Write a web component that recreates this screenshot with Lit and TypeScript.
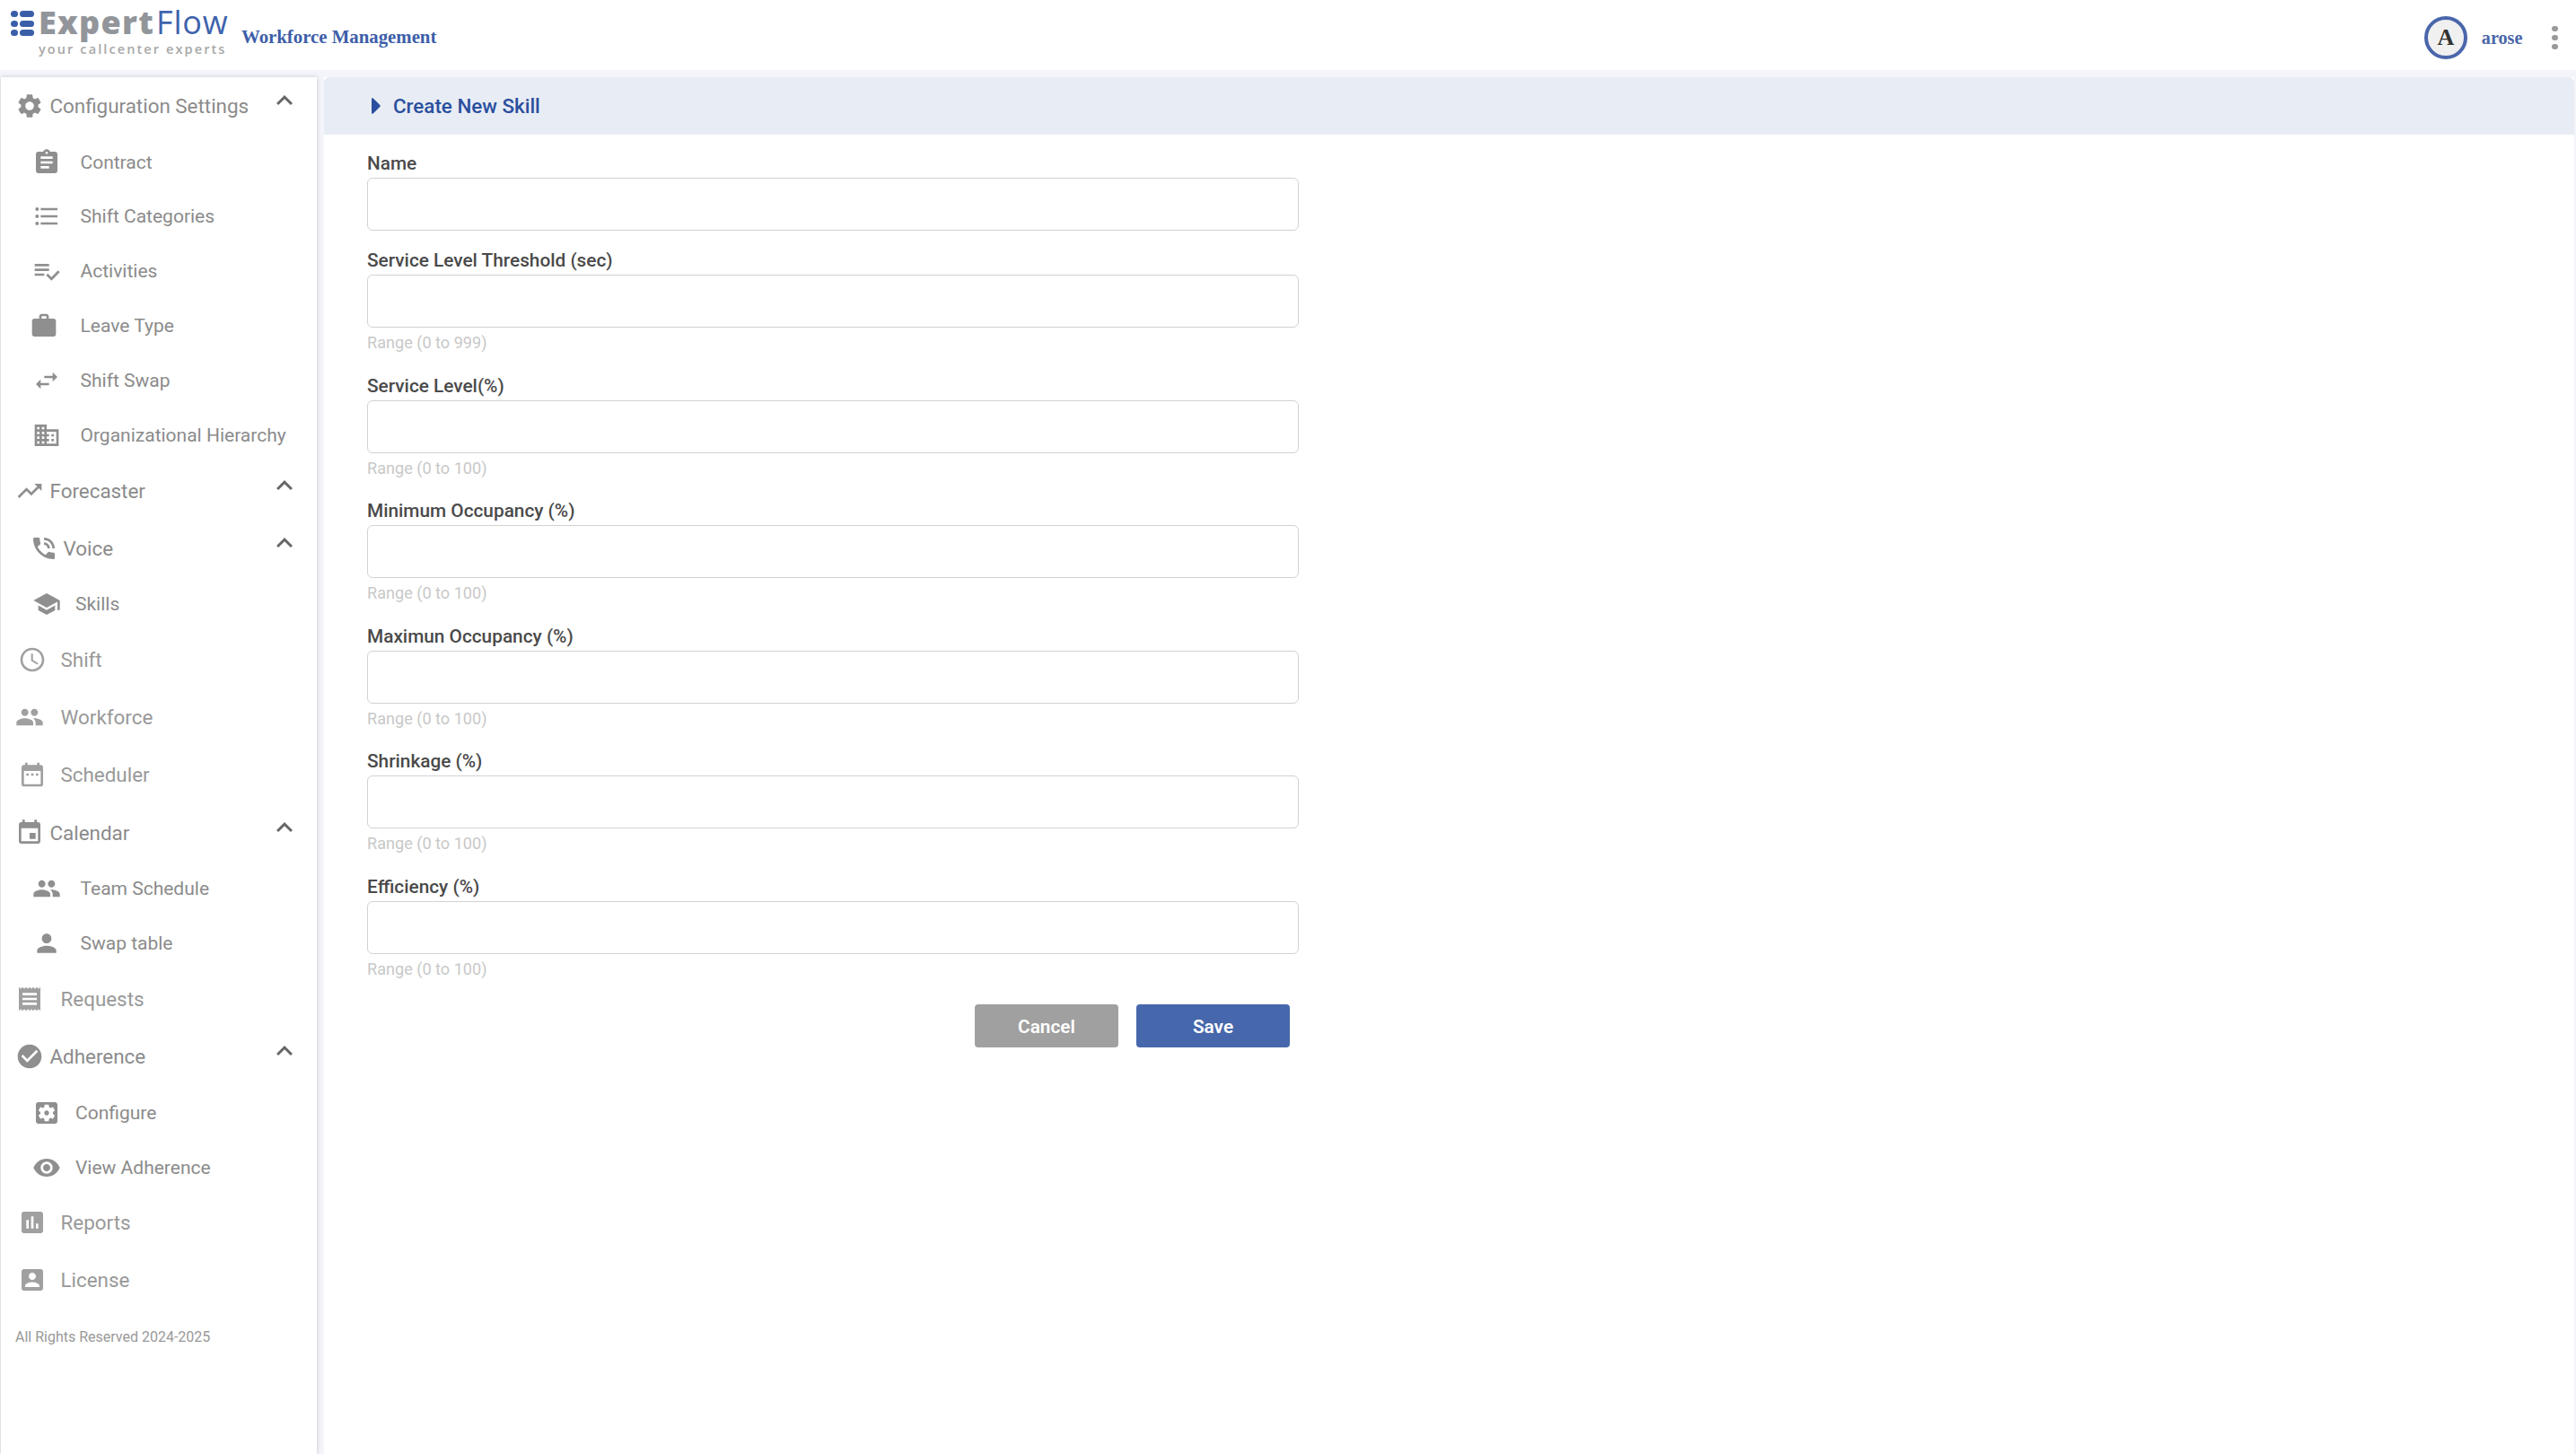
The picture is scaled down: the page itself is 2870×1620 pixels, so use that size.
import { LitElement, html, css, svg } from "lit";
import { customElement } from "lit/decorators.js";

const P: Record<string, string> = {
  settings: "M19.14 12.94c.04-.3.06-.61.06-.94 0-.32-.02-.64-.07-.94l2.03-1.58c.18-.14.23-.41.12-.61l-1.92-3.32c-.12-.22-.37-.29-.59-.22l-2.39.96c-.5-.38-1.03-.7-1.62-.94l-.36-2.54c-.04-.24-.24-.41-.48-.41h-3.84c-.24 0-.43.17-.47.41l-.36 2.54c-.59.24-1.13.57-1.62.94l-2.39-.96c-.22-.08-.47 0-.59.22L2.74 8.87c-.12.21-.08.47.12.61l2.03 1.58c-.05.3-.09.63-.09.94s.02.64.07.94l-2.03 1.58c-.18.14-.23.41-.12.61l1.92 3.32c.12.22.37.29.59.22l2.39-.96c.5.38 1.03.7 1.62.94l.36 2.54c.05.24.24.41.48.41h3.84c.24 0 .44-.17.47-.41l.36-2.54c.59-.24 1.13-.56 1.62-.94l2.39.96c.22.08.47 0 .59-.22l1.92-3.32c.12-.22.07-.47-.12-.61l-2.01-1.58zM12 15.6c-1.98 0-3.6-1.62-3.6-3.6s1.62-3.6 3.6-3.6 3.6 1.62 3.6 3.6-1.62 3.6-3.6 3.6z",
  assignment: "M19 3h-4.18C14.4 1.84 13.3 1 12 1c-1.3 0-2.4.84-2.82 2H5c-1.1 0-2 .9-2 2v14c0 1.1.9 2 2 2h14c1.1 0 2-.9 2-2V5c0-1.1-.9-2-2-2zm-7 0c.55 0 1 .45 1 1s-.45 1-1 1-1-.45-1-1 .45-1 1-1zm2 14H7v-2h7v2zm3-4H7v-2h10v2zm0-4H7V7h10v2z",
  list: "M4 10.5c-.83 0-1.5.67-1.5 1.5s.67 1.5 1.5 1.5 1.5-.67 1.5-1.5-.67-1.5-1.5-1.5zm0-6c-.83 0-1.5.67-1.5 1.5S3.17 7.5 4 7.5 5.5 6.83 5.5 6 4.83 4.5 4 4.5zm0 12c-.83 0-1.5.68-1.5 1.5s.68 1.5 1.5 1.5 1.5-.68 1.5-1.5-.67-1.5-1.5-1.5zM7 19h14v-2H7v2zm0-6h14v-2H7v2zm0-8v2h14V5H7z",
  playlist: "M14 10H2v2h12v-2zm0-4H2v2h12V6zM2 16h8v-2H2v2zm19.5-4.5L23 13l-6.99 7-4.51-4.5L13 14l3.01 3 5.49-5.5z",
  work: "M20 6h-4V4c0-1.11-.89-2-2-2h-4c-1.11 0-2 .89-2 2v2H4c-1.11 0-1.99.89-1.99 2L2 19c0 1.11.89 2 2 2h16c1.11 0 2-.89 2-2V8c0-1.11-.89-2-2-2zm-6 0h-4V4h4v2z",
  swap: "M6.99 11L3 15l3.99 4v-3H14v-2H6.99v-3zM21 9l-4-4v3h-7v2h7v3l4-4z",
  domain: "M12 7V3H2v18h20V7H12zM6 19H4v-2h2v2zm0-4H4v-2h2v2zm0-4H4V9h2v2zm0-4H4V5h2v2zm4 12H8v-2h2v2zm0-4H8v-2h2v2zm0-4H8V9h2v2zm0-4H8V5h2v2zm10 12h-8v-2h2v-2h-2v-2h2v-2h-2V9h8v10zm-2-8h-2v2h2v-2zm0 4h-2v2h2v-2z",
  trending: "M16 6l2.29 2.29-4.88 4.88-4-4L2 16.59 3.41 18l6-6 4 4 6.3-6.29L22 12V6z",
  phone: "M20 15.5c-1.25 0-2.45-.2-3.57-.57-.1-.03-.21-.05-.31-.05-.26 0-.51.1-.71.29l-2.2 2.2c-2.83-1.45-5.15-3.76-6.59-6.59l2.2-2.21c.28-.26.36-.65.25-1C8.7 6.45 8.5 5.25 8.5 4c0-.55-.45-1-1-1H4c-.55 0-1 .45-1 1 0 9.39 7.61 17 17 17 .55 0 1-.45 1-1v-3.5c0-.55-.45-1-1-1zM19 12h2c0-4.97-4.03-9-9-9v2c3.87 0 7 3.13 7 7zm-4 0h2c0-2.76-2.24-5-5-5v2c1.66 0 3 1.34 3 3z",
  school: "M5 13.18v4L12 21l7-3.82v-4L12 17l-7-3.82zM12 3L1 9l11 6 9-4.91V17h2V9L12 3z",
  schedule: "M11.99 2C6.47 2 2 6.48 2 12s4.47 10 9.99 10C17.52 22 22 17.52 22 12S17.52 2 11.99 2zM12 20c-4.42 0-8-3.58-8-8s3.58-8 8-8 8 3.58 8 8-3.58 8-8 8zm.5-13H11v6l5.25 3.15.75-1.23-4.5-2.67z",
  people: "M16 11c1.66 0 2.99-1.34 2.99-3S17.66 5 16 5c-1.66 0-3 1.34-3 3s1.34 3 3 3zm-8 0c1.66 0 2.99-1.34 2.99-3S9.66 5 8 5C6.34 5 5 6.34 5 8s1.34 3 3 3zm0 2c-2.33 0-7 1.17-7 3.5V19h14v-2.5c0-2.33-4.67-3.5-7-3.5zm8 0c-.29 0-.62.02-.97.05 1.16.84 1.97 1.97 1.97 3.45V19h6v-2.5c0-2.33-4.67-3.5-7-3.5z",
  daterange: "M9 11H7v2h2v-2zm4 0h-2v2h2v-2zm4 0h-2v2h2v-2zm2-7h-1V2h-2v2H8V2H6v2H5c-1.11 0-1.99.9-1.99 2L3 20c0 1.1.89 2 2 2h14c1.1 0 2-.9 2-2V6c0-1.1-.9-2-2-2zm0 16H5V9h14v11z",
  event: "M17 12h-5v5h5v-5zM16 1v2H8V1H6v2H5c-1.11 0-1.99.9-1.99 2L3 19c0 1.1.89 2 2 2h14c1.1 0 2-.9 2-2V5c0-1.1-.9-2-2-2h-1V1h-2zm3 18H5V8h14v11z",
  person: "M12 12c2.21 0 4-1.79 4-4s-1.79-4-4-4-4 1.79-4 4 1.79 4 4 4zm0 2c-2.67 0-8 1.34-8 4v2h16v-2c0-2.66-5.33-4-8-4z",
  receipt: "M18 17H6v-2h12v2zm0-4H6v-2h12v2zm0-4H6V7h12v2zM3 22l1.5-1.5L6 22l1.5-1.5L9 22l1.5-1.5L12 22l1.5-1.5L15 22l1.5-1.5L18 22l1.5-1.5L21 22V2l-1.5 1.5L18 2l-1.5 1.5L15 2l-1.5 1.5L12 2l-1.5 1.5L9 2 7.5 3.5 6 2 4.5 3.5 3 2v20z",
  check: "M12 2C6.48 2 2 6.48 2 12s4.48 10 10 10 10-4.48 10-10S17.52 2 12 2zm-2 15l-5-5 1.41-1.41L10 14.17l7.59-7.59L19 8l-9 9z",
  apps: "M12 10c-1.1 0-2 .9-2 2s.9 2 2 2 2-.9 2-2-.9-2-2-2zm7-7H5c-1.11 0-2 .9-2 2v14c0 1.1.89 2 2 2h14c1.11 0 2-.9 2-2V5c0-1.1-.89-2-2-2zm-1.75 9c0 .23-.02.46-.05.68l1.48 1.16c.13.11.17.3.08.45l-1.4 2.42c-.09.15-.27.21-.43.15l-1.74-.7c-.36.28-.76.51-1.18.69l-.26 1.85c-.03.17-.18.3-.35.3h-2.8c-.17 0-.32-.13-.35-.29l-.26-1.85c-.43-.18-.82-.41-1.18-.69l-1.74.7c-.16.06-.34 0-.43-.15l-1.4-2.42c-.09-.15-.05-.34.08-.45l1.48-1.16c-.03-.23-.05-.46-.05-.69 0-.23.02-.46.05-.68l-1.48-1.16c-.13-.11-.17-.3-.08-.45l1.4-2.42c.09-.15.27-.21.43-.15l1.74.7c.36-.28.76-.51 1.18-.69l.26-1.85c.03-.17.18-.3.35-.3h2.8c.17 0 .32.13.35.29l.26 1.85c.43.18.82.41 1.18.69l1.74-.7c.16-.06.34 0 .43.15l1.4 2.42c.09.15.05.34-.08.45l-1.48 1.16c.03.23.05.46.05.69z",
  eye: "M12 4.5C7 4.5 2.73 7.61 1 12c1.73 4.39 6 7.5 11 7.5s9.27-3.11 11-7.5c-1.73-4.39-6-7.5-11-7.5zM12 17c-2.76 0-5-2.24-5-5s2.24-5 5-5 5 2.24 5 5-2.24 5-5 5zm0-8c-1.66 0-3 1.34-3 3s1.34 3 3 3 3-1.34 3-3-1.34-3-3-3z",
  assess: "M19 3H5c-1.1 0-2 .9-2 2v14c0 1.1.9 2 2 2h14c1.1 0 2-.9 2-2V5c0-1.1-.9-2-2-2zM9 17H7v-7h2v7zm4 0h-2V7h2v10zm4 0h-2v-4h2v4z",
  account: "M3 5v14c0 1.1.89 2 2 2h14c1.1 0 2-.9 2-2V5c0-1.1-.9-2-2-2H5c-1.11 0-2 .9-2 2zm12 4c0 1.66-1.34 3-3 3s-3-1.34-3-3 1.34-3 3-3 3 1.34 3 3zm-9 8c0-2 4-3.1 6-3.1s6 1.1 6 3.1v1H6v-1z",
};

const icon = (name: string, cls = "ic") => html`<svg class=${cls} viewBox="0 0 24 24">${svg`<path d=${P[name]}></path>`}</svg>`;

type Item = { t: string; i: string; k: string; c?: boolean };
const NAV: Item[] = [
  { t: "Configuration Settings", i: "settings", k: "head", c: true },
  { t: "Contract", i: "assignment", k: "sub" },
  { t: "Shift Categories", i: "list", k: "sub" },
  { t: "Activities", i: "playlist", k: "sub" },
  { t: "Leave Type", i: "work", k: "sub shifted" },
  { t: "Shift Swap", i: "swap", k: "sub" },
  { t: "Organizational Hierarchy", i: "domain", k: "sub" },
  { t: "Forecaster", i: "trending", k: "head", c: true },
  { t: "Voice", i: "phone", k: "head voice", c: true },
  { t: "Skills", i: "school", k: "sub near" },
  { t: "Shift", i: "schedule", k: "plain" },
  { t: "Workforce", i: "people", k: "plain wide" },
  { t: "Scheduler", i: "daterange", k: "plain" },
  { t: "Calendar", i: "event", k: "head", c: true },
  { t: "Team Schedule", i: "people", k: "sub" },
  { t: "Swap table", i: "person", k: "sub" },
  { t: "Requests", i: "receipt", k: "plain wide" },
  { t: "Adherence", i: "check", k: "head", c: true },
  { t: "Configure", i: "apps", k: "sub near" },
  { t: "View Adherence", i: "eye", k: "sub near" },
  { t: "Reports", i: "assess", k: "plain" },
  { t: "License", i: "account", k: "plain" },
];

const FIELDS: [string, string?][] = [
  ["Name"],
  ["Service Level Threshold (sec)", "Range (0 to 999)"],
  ["Service Level(%)", "Range (0 to 100)"],
  ["Minimum Occupancy (%)", "Range (0 to 100)"],
  ["Maximun Occupancy (%)", "Range (0 to 100)"],
  ["Shrinkage (%)", "Range (0 to 100)"],
  ["Efficiency (%)", "Range (0 to 100)"],
];

@customElement("app-root")
export class AppRoot extends LitElement {
  static styles = css`
    :host { display: block; width: 2870px; height: 1620px; overflow: hidden; background: #f3f5fa; font-family: Roboto, "Liberation Sans", sans-serif; }
    * { box-sizing: border-box; }
    .top { height: 78px; background: #fff; display: flex; align-items: center; }
    .logo { display: flex; gap: 5px; margin-left: 12px; margin-top: -4px; width: 243px; align-items: flex-start; }
    .mark { width: 26px; height: 28px; margin-top: 2px; flex: none; }
    .logotext { display: flex; flex-direction: column; }
    .wordmark { font-family: "Open Sans", sans-serif; font-size: 36px; line-height: 30px; height: 30px; letter-spacing: 1.3px; color: #92959a; font-weight: 800; white-space: nowrap; }
    .wordmark span { color: #3f63ad; font-weight: 500; letter-spacing: 0.8px; margin-left: 2px; }
    .tag { font-family: "Open Sans", sans-serif; font-weight: 600; font-size: 14.5px; line-height: 18px; margin-top: 6px; letter-spacing: 2.1px; color: #a8a8a8; white-space: nowrap; }
    .app { font-family: "Liberation Serif", serif; font-weight: 700; font-size: 20.8px; color: #3d5ea8; margin-left: 14px; position: relative; top: 2px; }
    .user { margin-left: auto; display: flex; align-items: center; padding: 6px 20px 0 0; }
    .avatar { width: 48px; height: 48px; border-radius: 50%; border: 4px solid #4a66ab; background: #f0f0f0; display: flex; align-items: center; justify-content: center; font-family: "Liberation Serif", serif; font-weight: 700; font-size: 26px; color: #333; }
    .uname { font-family: "Liberation Serif", serif; font-weight: 700; font-size: 20.2px; color: #4a66a8; margin-left: 16px; }
    .dots { margin-left: 33px; display: flex; flex-direction: column; gap: 3.3px; }
    .dots i { display: block; width: 6.6px; height: 6.6px; border-radius: 50%; background: #999; }

    .body { display: flex; height: 1542px; padding-top: 8px; padding-right: 2px; }
    .side { width: 352px; margin-left: 1px; background: #fff; box-shadow: 0 0 5px rgba(0,0,0,.18); flex: none; display: flex; flex-direction: column; }
    .row { display: flex; align-items: center; color: #8b8b8b; flex: none; white-space: nowrap; }
    .ic { width: 32px; height: 32px; fill: #8f8f8f; flex: none; }
    .row.head, .row.plain { height: 64px; font-size: 22.4px; }
    .row.head { padding-left: 15.5px; gap: 7px; }
    .row.plain { padding-left: 18.5px; gap: 16px; color: #999; padding-bottom: 1px; }
    .row.plain .ic { fill: #a0a0a0; }
    .row.plain.wide { padding-left: 15.5px; gap: 19px; }
    .row.voice { padding-left: 31.5px; gap: 6px; }
    .row.sub { height: 60.8px; font-size: 21px; padding-left: 34.5px; gap: 22px; padding-top: 0.5px; }
    .row.sub.shifted { padding-left: 31.5px; gap: 25px; }
    .row.sub.near { gap: 16.5px; }
    .chev { width: 36px; height: 36px; fill: #666; margin-left: auto; margin-right: 18px; align-self: flex-start; margin-top: 8px; flex: none; }
    .copy { font-size: 16px; color: #999; padding: 22px 0 0 16px; line-height: 18px; }

    .main { flex: 1; margin-left: 8px; background: #fff; display: flex; flex-direction: column; min-width: 0; }
    .bar { height: 64px; background: #e8ecf4; border-radius: 6px 6px 0 0; display: flex; align-items: center; padding-left: 52px; gap: 14px; flex: none; }
    .bar svg { width: 11px; height: 18px; fill: #2a4f9e; flex: none; }
    .bar span { font-size: 22.4px; font-weight: 500; color: #2a4f9e; }
    form { display: flex; flex-direction: column; width: 1086px; padding: 20px 0 0 48px; gap: 24.5px; margin: 0; }
    form .first { margin-bottom: -3.5px; }
    .field { display: flex; flex-direction: column; }
    label { font-size: 20.8px; line-height: 24px; font-weight: 500; color: #4a4a4a; margin-bottom: 4px; height: 24px; }
    input { height: 59px; width: 100%; border: 1.5px solid #d2d2d2; border-radius: 6px; background: #fff; outline: none; padding: 0 12px; display: block; }
    .hint { font-size: 18.1px; line-height: 22px; margin-top: 6px; color: #c8c8c8; }
    .btns { display: flex; justify-content: flex-end; gap: 20px; padding-right: 10px; margin-top: 4px; }
    button { height: 48px; border: 0; border-radius: 4px; color: #fff; font: 600 20.8px Roboto, sans-serif; padding: 1px 0 0; }
    .cancel { width: 160px; background: #a0a0a0; }
    .save { width: 171px; background: #4667ab; }
  `;

  render() {
    return html`
      <div class="top">
        <div class="logo">
          <svg class="mark" viewBox="0 0 26 28">
            ${[0, 11, 21].map((y) => svg`
              <rect x="0" y=${y} width="8" height="7" rx="3.5" fill="#3a5ea8"></rect>
              <rect x="10" y=${y} width="16" height="7" rx="3.5" fill="#3a5ea8"></rect>
            `)}
          </svg>
          <div class="logotext">
            <div class="wordmark">Expert<span>Flow</span></div>
            <div class="tag">your callcenter experts</div>
          </div>
        </div>
        <div class="app">Workforce Management</div>
        <div class="user">
          <div class="avatar">A</div>
          <div class="uname">arose</div>
          <div class="dots"><i></i><i></i><i></i></div>
        </div>
      </div>
      <div class="body">
        <nav class="side">
          ${NAV.map((n) => html`
            <div class="row ${n.k}">
              ${icon(n.i)}
              <span>${n.t}</span>
              ${n.c ? html`<svg class="chev" viewBox="0 0 24 24"><path d="M12 8l-6 6 1.41 1.41L12 10.83l4.59 4.58L18 14z"></path></svg>` : ""}
            </div>`)}
          <div class="copy">All Rights Reserved 2024-2025</div>
        </nav>
        <main class="main">
          <div class="bar">
            <svg viewBox="0 0 11 18"><path d="M1 1.2c0-.9 1-1.3 1.7-.7l7.6 7.6c.5.5.5 1.300 0 1.800l-7.600 7.600c-.7.6-1.700.2-1.700-.7z"></path></svg>
            <span>Create New Skill</span>
          </div>
          <form>
            ${FIELDS.map(([l, h]) => html`
              <div class="field ${h ? "" : "first"}">
                <label>${l}</label>
                <input type="text" />
                ${h ? html`<div class="hint">${h}</div>` : ""}
              </div>`)}
            <div class="btns">
              <button type="button" class="cancel">Cancel</button>
              <button type="button" class="save">Save</button>
            </div>
          </form>
        </main>
      </div>
    `;
  }
}
